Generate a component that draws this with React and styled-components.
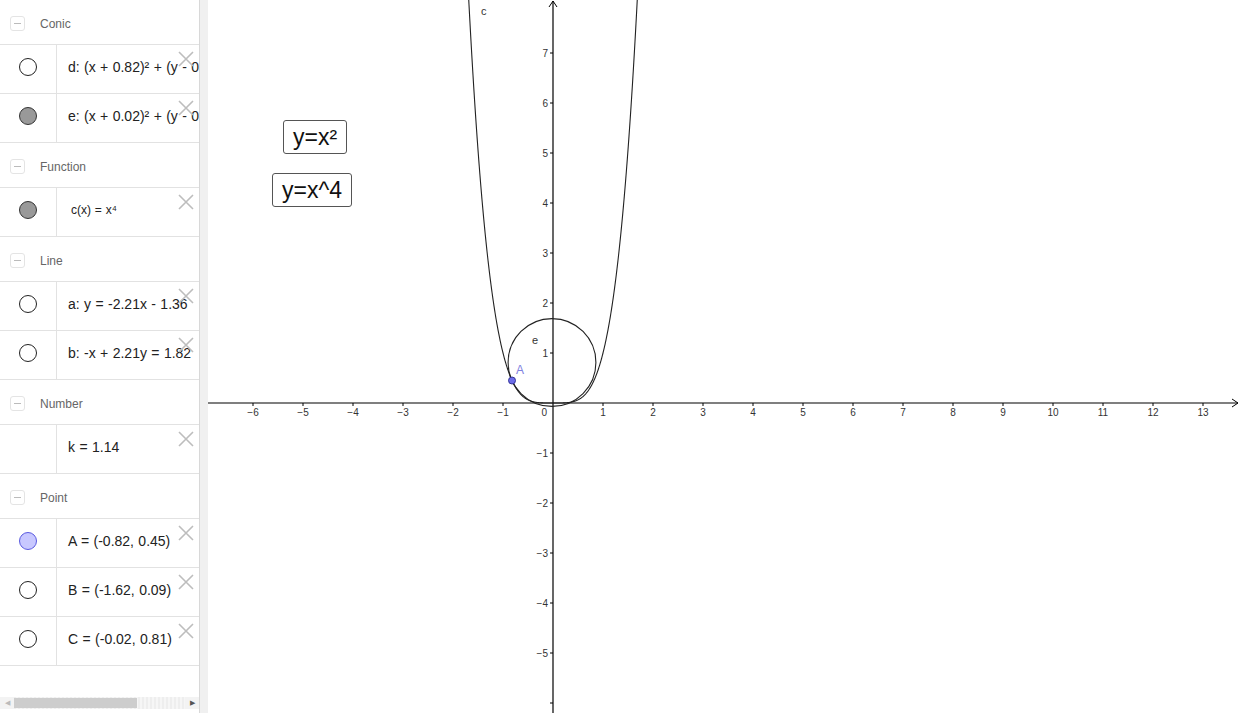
import React from "react";
import styled, { createGlobalStyle } from "styled-components";

const Global = createGlobalStyle`
  html, body {
    margin: 0;
    padding: 0;
    background: #fff;
    font-family: "Liberation Sans", Arial, sans-serif;
    overflow: hidden;
  }
`;

const Page = styled.div`
  display: flex;
  width: 1240px;
  height: 713px;
  overflow: hidden;
`;

const Sidebar = styled.aside`
  width: 200px;
  flex: none;
  display: flex;
  flex-direction: column;
  border-right: 1px solid #d8d8d8;
  box-sizing: border-box;
  background: #fff;
  overflow: hidden;
`;

const Dragger = styled.div`
  width: 8px;
  flex: none;
  background: #f0f0f0;
`;

const List = styled.div`
  flex: 1;
  display: flex;
  flex-direction: column;
`;

const Header = styled.div`
  height: 41px;
  padding-top: 3px;
  display: flex;
  align-items: center;
  gap: 15px;
  padding-left: 10px;
  border-bottom: 1px solid #e2e2e2;
  color: #666;
  font-size: 12px;
`;

const Collapse = styled.span`
  width: 13px;
  height: 13px;
  border: 1px solid #e4e4e4;
  border-radius: 3px;
  display: flex;
  align-items: center;
  justify-content: center;
  &::after {
    content: "";
    width: 7px;
    height: 1px;
    background: #bbb;
  }
`;

const Row = styled.div`
  position: relative;
  height: 48px;
  display: flex;
  border-bottom: 1px solid #e2e2e2;
`;

const Marble = styled.div`
  width: 57px;
  flex: none;
  border-right: 1px solid #e2e2e2;
  display: flex;
  align-items: flex-start;
  justify-content: center;
  padding-top: 13px;
  box-sizing: border-box;
  &::after {
    content: "";
    display: ${(p) => (p.$none ? "none" : "block")};
    width: 18px;
    height: 18px;
    border-radius: 50%;
    box-sizing: border-box;
    border: 1px solid ${(p) => p.$stroke || "#222"};
    background: ${(p) => p.$fill || "#fff"};
  }
`;

const Expr = styled.div`
  flex: 1;
  height: 44px;
  display: flex;
  align-items: center;
  padding-left: ${(p) => (p.$small ? "14px" : "11px")};
  font-size: ${(p) => (p.$small ? "12px" : "14px")};
  word-spacing: 0.5px;
  color: #222;
  white-space: nowrap;
  overflow: hidden;
`;

const Close = styled.svg`
  position: absolute;
  top: 6px;
  right: 5px;
`;

const Scrollbar = styled.div`
  height: 12px;
  margin-bottom: 4px;
  display: flex;
  align-items: center;
  background: #f3f3f3;
  color: #999;
  font-size: 7px;
`;

const Arrow = styled.span`
  width: 14px;
  text-align: center;
  color: ${(p) => (p.$dark ? "#555" : "#bbb")};
`;

const Track = styled.div`
  flex: 1;
  height: 100%;
  display: flex;
  align-items: center;
  background: repeating-linear-gradient(90deg, #eee 0 2px, #f6f6f6 2px 4px);
`;

const Thumb = styled.div`
  width: 123px;
  height: 10px;
  background: #cdcdcd;
`;

const Graphics = styled.main`
  position: relative;
  flex: 1;
  background: #fff;
`;

const TextBox = styled.div`
  position: absolute;
  left: ${(p) => p.$x}px;
  top: ${(p) => p.$y}px;
  height: 32px;
  padding: 0 9px;
  display: flex;
  align-items: center;
  border: 1px solid #555;
  border-radius: 3px;
  font-size: 23px;
  color: #111;
  background: #fff;
`;

const Cross = () => (
  <Close width="16" height="16" viewBox="0 0 16 16">
    <path d="M1 1L15 15M15 1L1 15" stroke="#bdbdbd" strokeWidth="1.6" />
  </Close>
);

const groups = [
  {
    name: "Conic",
    items: [
      { text: "d: (x + 0.82)² + (y - 0.45)² = 0.77" },
      { text: "e: (x + 0.02)² + (y - 0.81)² = 0.77", fill: "#999", stroke: "#333" },
    ],
  },
  {
    name: "Function",
    items: [{ text: "c(x) = x⁴", fill: "#999", stroke: "#333", small: true }],
  },
  {
    name: "Line",
    items: [{ text: "a: y = -2.21x - 1.36" }, { text: "b: -x + 2.21y = 1.82" }],
  },
  { name: "Number", items: [{ text: "k = 1.14", none: true }] },
  {
    name: "Point",
    items: [
      { text: "A = (-0.82, 0.45)", fill: "#c8c8ff", stroke: "#5a5ae0" },
      { text: "B = (-1.62, 0.09)" },
      { text: "C = (-0.02, 0.81)" },
    ],
  },
];

const OX = 345;
const OY = 403;
const U = 50;
const px = (x) => OX + x * U;
const py = (y) => OY - y * U;
const fmt = (n) => (n < 0 ? "\u2212" + -n : String(n));

const quartic = () => {
  const pts = [];
  for (let x = -1.7; x <= 1.7001; x += 0.005) {
    pts.push(`${px(x).toFixed(2)},${py(x ** 4).toFixed(2)}`);
  }
  return "M" + pts.join("L");
};

const Plot = () => {
  const xs = [];
  for (let n = -6; n <= 13; n++) if (n !== 0) xs.push(n);
  const ys = [];
  for (let n = -6; n <= 7; n++) if (n !== 0) ys.push(n);
  return (
    <svg width="1032" height="713" style={{ display: "block" }}>
      <g fontFamily="Liberation Sans, Arial, sans-serif" fontSize="10" fill="#333">
        <line x1="0" y1={OY} x2="1030" y2={OY} stroke="#000" strokeWidth="1.2" />
        <path d={`M1024,${OY - 4}L1030,${OY}L1024,${OY + 4}`} fill="none" stroke="#000" />
        <line x1={OX} y1="713" x2={OX} y2="1" stroke="#000" strokeWidth="1.2" />
        <path d={`M${OX - 4},7L${OX},1L${OX + 4},7`} fill="none" stroke="#000" />
        {xs.map((n) => (
          <g key={"x" + n}>
            <line x1={px(n)} y1={OY} x2={px(n)} y2={OY + 3} stroke="#000" />
            <text x={px(n)} y={OY + 13} textAnchor="middle">{fmt(n)}</text>
          </g>
        ))}
        {ys.map((n) => (
          <g key={"y" + n}>
            <line x1={OX - 3} y1={py(n)} x2={OX} y2={py(n)} stroke="#000" />
            {n > -6 && (
              <text x={OX - 5} y={py(n) + 3.5} textAnchor="end">{fmt(n)}</text>
            )}
          </g>
        ))}
        <text x={OX - 6} y={OY + 13} textAnchor="end">0</text>
        <path d={quartic()} fill="none" stroke="#222" strokeWidth="1.1" />
        <circle cx={px(-0.02)} cy={py(0.81)} r="43.9" fill="none" stroke="#222" strokeWidth="1.1" />
        <text x="273" y="15" fontSize="11">c</text>
        <text x="324" y="344" fontSize="11">e</text>
        <circle cx={px(-0.82)} cy={py(0.45)} r="3.5" fill="#6d6de8" stroke="#33339a" strokeWidth="1" />
        <text x="308" y="374" fontSize="12" fill="#8080e0">A</text>
      </g>
    </svg>
  );
};

export default function App() {
  return (
    <Page>
      <Global />
      <Sidebar>
        <List>
          {groups.map((g) => (
            <React.Fragment key={g.name}>
              <Header>
                <Collapse />
                {g.name}
              </Header>
              {g.items.map((it) => (
                <Row key={it.text}>
                  <Marble $fill={it.fill} $stroke={it.stroke} $none={it.none} />
                  <Expr $small={it.small}>{it.text}</Expr>
                  <Cross />
                </Row>
              ))}
            </React.Fragment>
          ))}
        </List>
        <Scrollbar>
          <Arrow>◀</Arrow>
          <Track>
            <Thumb />
          </Track>
          <Arrow $dark>▶</Arrow>
        </Scrollbar>
      </Sidebar>
      <Dragger />
      <Graphics>
        <Plot />
        <TextBox $x={75} $y={120}>y=x²</TextBox>
        <TextBox $x={64} $y={173}>y=x^4</TextBox>
      </Graphics>
    </Page>
  );
}
